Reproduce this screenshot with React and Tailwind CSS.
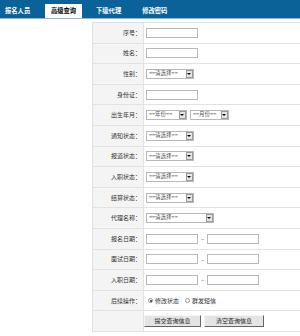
import React from "react";

const font = { fontFamily: '"Noto Sans CJK SC", "Noto Sans", sans-serif' };

function TextBox({ w = "w-[52px]" }) {
  return <div className={`${w} h-[10px] border border-[#b5b9bd] bg-white`} />;
}

function Select({ text = "==请选择==", w = "w-[48px]" }) {
  return (
    <div className={`${w} h-[10px] border border-[#b5b9bd] bg-white flex items-center justify-between`}>
      <span className="pl-[2px] text-[5.5px] leading-none text-[#555]">{text}</span>
      <span className="w-[7px] h-[8px] mr-[0.5px] border border-[#9a9a9a] bg-[#e6e6e6] flex items-center justify-center">
        <span className="w-0 h-0 border-l-[2px] border-r-[2px] border-t-[2px] border-l-transparent border-r-transparent border-t-black" />
      </span>
    </div>
  );
}

function DateRange() {
  return (
    <div className="flex items-center">
      <TextBox />
      <span className="w-[9px] text-center text-[6px] text-[#555]">–</span>
      <TextBox />
    </div>
  );
}

function Radio({ checked, label }) {
  return (
    <label className="flex items-center gap-[2px]">
      <span className="w-[5px] h-[5px] rounded-full border border-[#999] bg-white flex items-center justify-center">
        {checked && <span className="w-[2px] h-[2px] rounded-full bg-[#333]" />}
      </span>
      <span className="text-[6px] leading-none text-[#333]">{label}</span>
    </label>
  );
}

function Btn({ w, children }) {
  return (
    <button className={`${w} h-[12px] bg-[#e4e4e4] border border-t-[#f5f5f5] border-l-[#f5f5f5] border-b-[#666] border-r-[#666] text-[6px] leading-none text-[#222]`}>
      {children}
    </button>
  );
}

const rows = [
  ["序号", <TextBox />],
  ["姓名", <TextBox />],
  ["性别", <Select />],
  ["身份证", <TextBox />],
  [
    "出生年月",
    <div className="flex items-center gap-[3px]">
      <Select text="==年份==" w="w-[41px]" />
      <Select text="==月份==" w="w-[39px]" />
    </div>,
  ],
  ["通知状态", <Select />],
  ["报道状态", <Select />],
  ["入职状态", <Select />],
  ["结算状态", <Select />],
  ["代理名称", <Select w="w-[68px]" />],
  ["报名日期", <DateRange />],
  ["面试日期", <DateRange />],
  ["入职日期", <DateRange />],
  [
    "后续操作",
    <div className="flex items-center gap-[6px] pl-[2px]">
      <Radio checked label="修改状态" />
      <Radio label="群发短信" />
    </div>,
  ],
  [
    "",
    <div className="flex items-center gap-[3px] -ml-[2px]">
      <Btn w="w-[57px]">提交查询信息</Btn>
      <Btn w="w-[60px]">清空查询信息</Btn>
    </div>,
  ],
];

export default function App() {
  return (
    <div className="w-[300px] h-[336px] bg-white overflow-hidden" style={font}>
      {/* 顶部导航 */}
      <div className="h-[19px] bg-[#0a6298] border-b border-[#8fb8d6] flex items-end text-[6.3px] leading-none font-bold">
        <div className="w-[45px] h-[14px] flex items-center pl-[5px] text-white">报名人员</div>
        <div className="w-[37px] h-[14px] bg-white flex items-center justify-center text-black">高级查询</div>
        <div className="h-[14px] flex items-center pl-[14px] text-white">下级代理</div>
        <div className="h-[14px] flex items-center pl-[21px] text-white">修改密码</div>
      </div>

      {/* 查询表格 */}
      <div className="ml-[92px] mt-[3px] w-[210px] border-t border-l border-[#e2e2e2]">
        {rows.map(([label, field], i) => (
          <div key={i} className="flex h-[20.6px] border-b border-[#e2e2e2]">
            <div className="w-[51px] shrink-0 bg-[#f4f4f4] border-r border-[#e2e2e2] flex items-center justify-end pr-[2px] text-[6px] leading-none text-[#333]">
              {label ? `${label}：` : ""}
            </div>
            <div className="flex-1 flex items-center pl-[2px]">{field}</div>
          </div>
        ))}
      </div>
    </div>
  );
}
